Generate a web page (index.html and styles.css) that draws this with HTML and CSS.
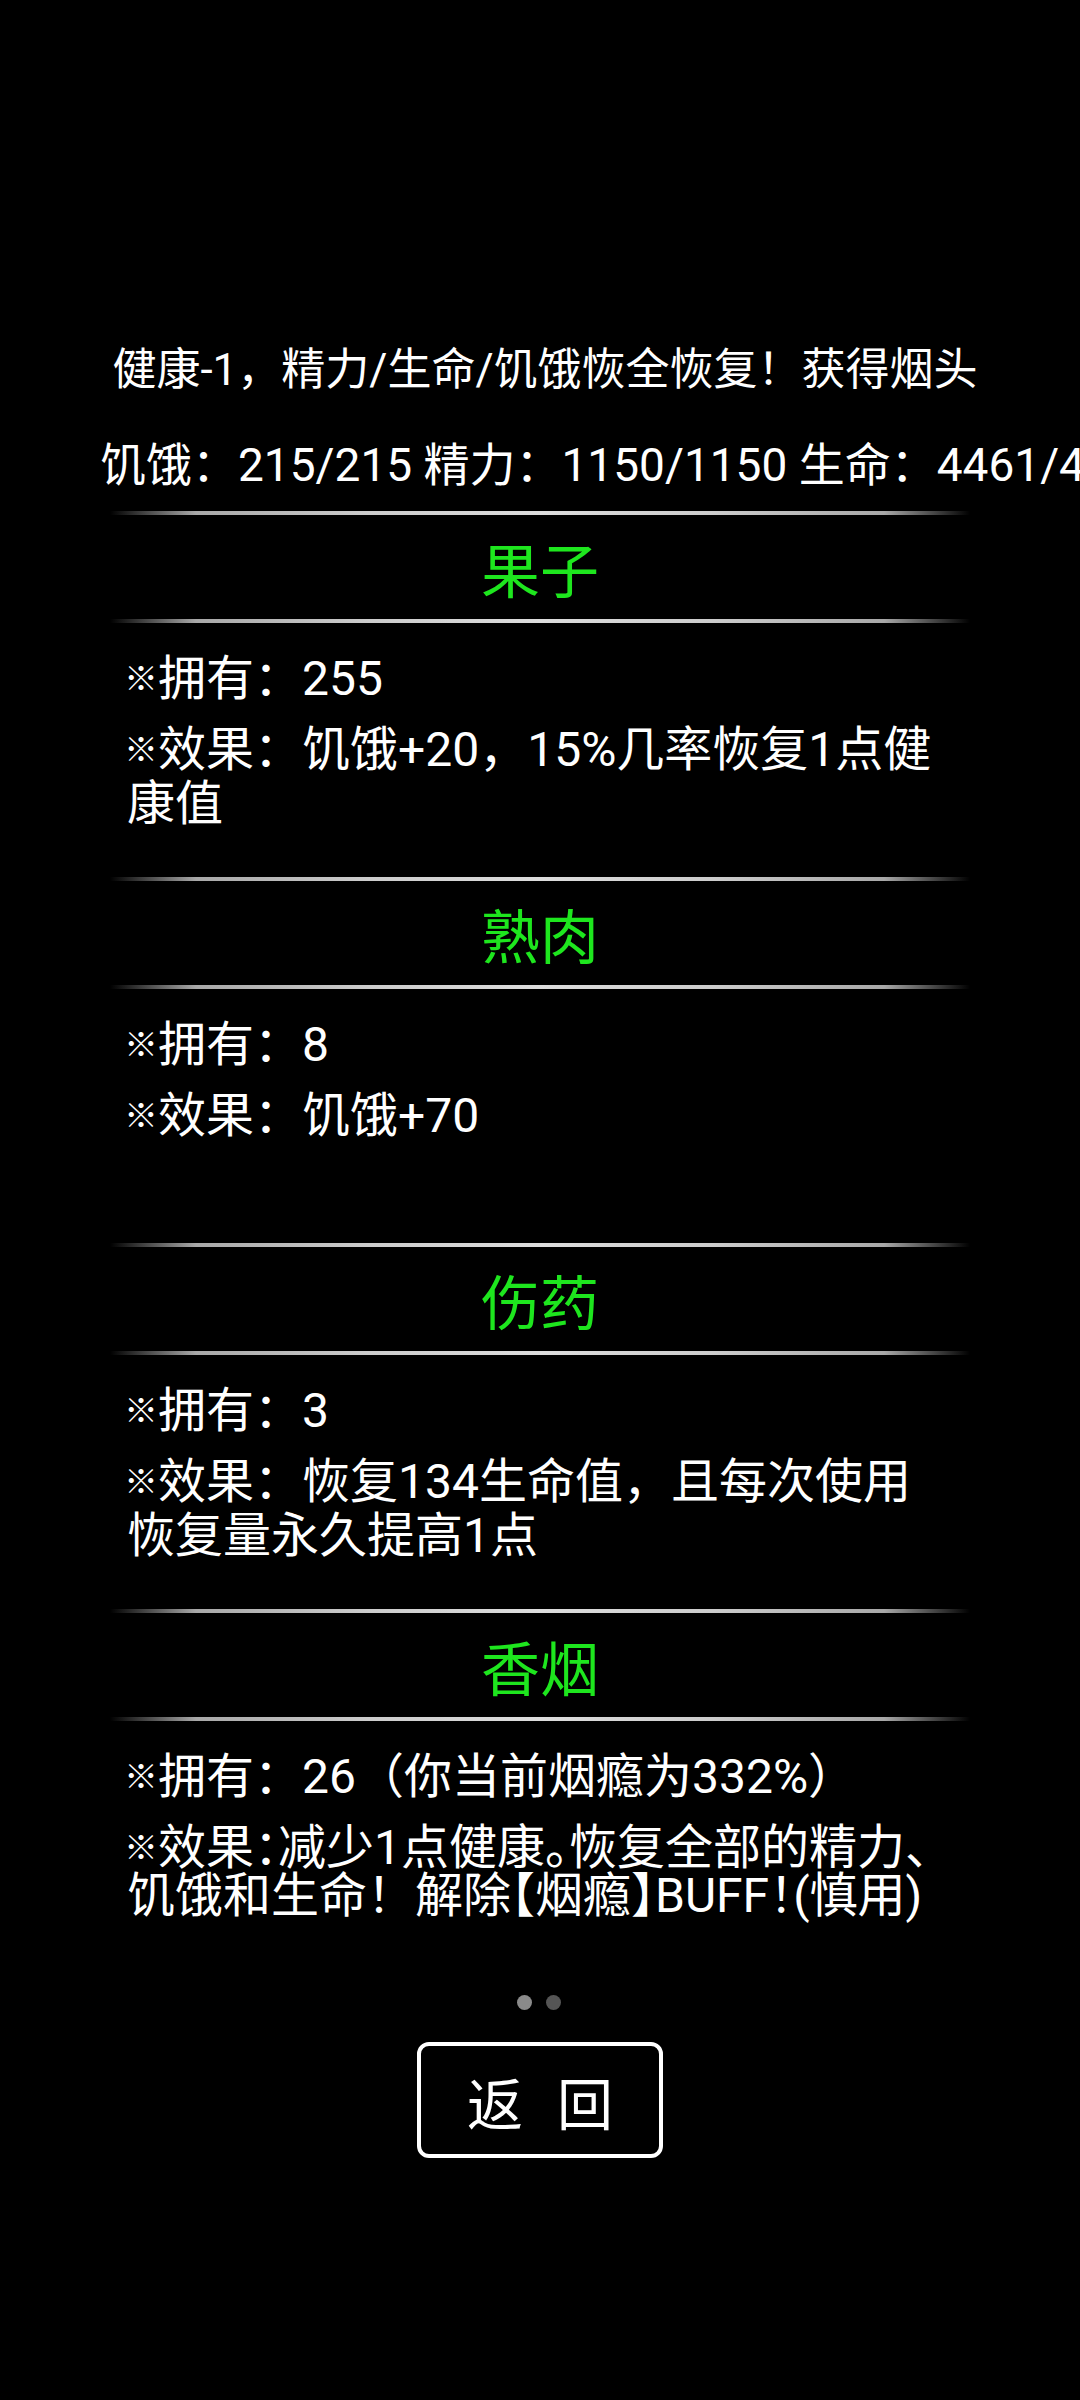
FILE: index.html
```html
<!DOCTYPE html>
<html lang="zh-CN">
<head>
<meta charset="utf-8">
<title>物品</title>
<link rel="stylesheet" href="styles.css">
</head>
<body>
<div class="page">
  <div class="message">健康-1，精力/生命/饥饿恢全恢复！获得烟头</div>
  <div class="stats">饥饿：215/215 精力：1150/1150 生命：4461/4461</div>

  <div class="item">
    <div class="sep"></div>
    <div class="title">果子</div>
    <div class="sep"></div>
    <div class="content">
      <p class="line"><span class="mark">※</span>拥有：255</p>
      <p class="line effect"><span class="mark">※</span>效果：饥饿+20，15%几率恢复1点健<br>康值</p>
    </div>
  </div>

  <div class="item">
    <div class="sep"></div>
    <div class="title">熟肉</div>
    <div class="sep"></div>
    <div class="content">
      <p class="line"><span class="mark">※</span>拥有：8</p>
      <p class="line effect"><span class="mark">※</span>效果：饥饿+70</p>
    </div>
  </div>

  <div class="item">
    <div class="sep"></div>
    <div class="title">伤药</div>
    <div class="sep"></div>
    <div class="content">
      <p class="line"><span class="mark">※</span>拥有：3</p>
      <p class="line effect"><span class="mark">※</span>效果：恢复134生命值，且每次使用<br>恢复量永久提高1点</p>
    </div>
  </div>

  <div class="item">
    <div class="sep"></div>
    <div class="title">香烟</div>
    <div class="sep"></div>
    <div class="content">
      <p class="line"><span class="mark">※</span>拥有：26（你当前烟瘾为332%）</p>
      <p class="line effect tight"><span class="mark">※</span>效果：减少1点健康。恢复全部的精力、<br>饥饿和生命<span class="full">！</span>解除【烟瘾】BUFF！(慎用)</p>
    </div>
  </div>

  <div class="dots">
    <span class="dot on"></span>
    <span class="dot"></span>
  </div>

  <div class="actions">
    <button class="back">返 回</button>
  </div>
</div>
</body>
</html>
```

FILE: styles.css
```css
html, body {
  margin: 0;
  padding: 0;
  background: #000;
}

body {
  width: 1080px;
  height: 2400px;
  overflow: hidden;
  color: #fff;
  font-family: Roboto, "Noto Sans CJK SC", sans-serif;
}

.page {
  padding-top: 344px;
  display: flex;
  flex-direction: column;
}

.message {
  font-size: 44px;
  line-height: 52px;
  text-align: center;
  padding-left: 10px;
  white-space: nowrap;
}

.stats {
  margin-top: 42px;
  padding-left: 100px;
  font-size: 46px;
  line-height: 54px;
  white-space: nowrap;
  overflow: hidden;
}

.item {
  display: flex;
  flex-direction: column;
}

.stats + .item {
  margin-top: 19px;
}

.sep {
  height: 4px;
  margin: 0 110px;
  background: linear-gradient(90deg,
    rgba(190, 190, 190, 0) 0%,
    #a8a8a8 10%,
    #cccccc 30%,
    #dddddd 50%,
    #cccccc 70%,
    #a8a8a8 90%,
    rgba(190, 190, 190, 0) 100%);
}

.title {
  height: 104px;
  display: flex;
  align-items: center;
  justify-content: center;
  font-size: 59px;
  color: #1ee61e;
}

.content {
  height: 254px;
  box-sizing: border-box;
  padding: 29px 0 0 127px;
}

.line {
  margin: 0;
  font-size: 48px;
  line-height: 54px;
  white-space: nowrap;
}

.effect {
  margin-top: 17px;
}

.effect.tight {
  line-height: 48px;
  margin-top: 20px;
  font-feature-settings: "halt";
}

.full {
  font-feature-settings: normal;
}

.mark {
  font-size: 34px;
  vertical-align: 4px;
  margin-left: -3px;
  font-feature-settings: normal;
}

.dots {
  margin-top: 20px;
  display: flex;
  justify-content: center;
  gap: 14px;
  padding-right: 2px;
}

.dot {
  width: 15px;
  height: 15px;
  border-radius: 50%;
  background: #555;
}

.dot.on {
  background: #8a8a8a;
}

.actions {
  margin-top: 32px;
  display: flex;
  justify-content: center;
}

.back {
  width: 246px;
  height: 116px;
  box-sizing: border-box;
  border: 4px solid #fff;
  border-radius: 12px;
  background: #000;
  color: #fff;
  font-family: Roboto, "Noto Sans CJK SC", sans-serif;
  font-size: 56px;
  letter-spacing: 10px;
  padding: 0 0 0 10px;
  display: flex;
  align-items: center;
  justify-content: center;
}
```
